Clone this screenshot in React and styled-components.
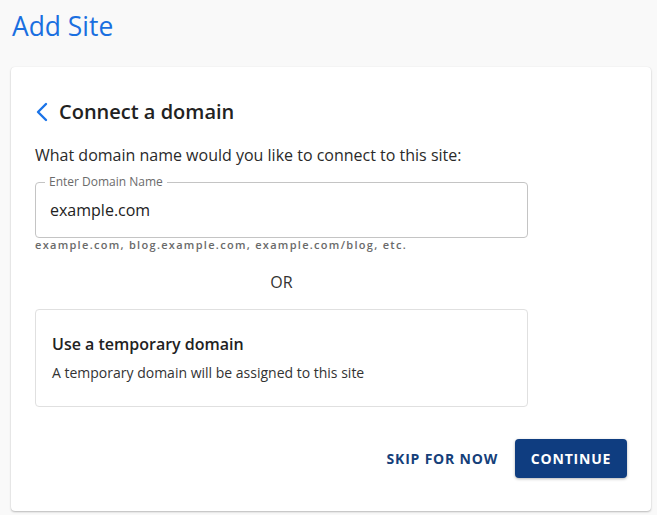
import React, { useState } from "react";
import styled, { createGlobalStyle } from "styled-components";

const GlobalStyle = createGlobalStyle`
  html, body {
    margin: 0;
    padding: 0;
    background: #f9f9f9;
    font-family: "Open Sans", "Noto Sans", sans-serif;
    color: #222;
  }
  * { box-sizing: border-box; }
`;

function App() {
  const [domain, setDomain] = useState("example.com");

  return (
    <>
      <GlobalStyle />
      <Page>
        <PageTitle>Add Site</PageTitle>
        <Card>
          <Header>
            <BackBtn aria-label="Back">
              <svg width="14" height="20" viewBox="0 0 14 20" fill="none">
                <path
                  d="M11 2L3 10L11 18"
                  stroke="#1a73e8"
                  strokeWidth="2.4"
                  strokeLinecap="round"
                  strokeLinejoin="round"
                />
              </svg>
            </BackBtn>
            <Heading>Connect a domain</Heading>
          </Header>

          <Question>What domain name would you like to connect to this site:</Question>

          <Content>
            <Field>
              <Legend>Enter Domain Name</Legend>
              <Input value={domain} onChange={(e) => setDomain(e.target.value)} />
            </Field>
            <Helper>example.com, blog.example.com, example.com/blog, etc.</Helper>

            <Or>OR</Or>

            <Option>
              <OptionTitle>Use a temporary domain</OptionTitle>
              <OptionText>A temporary domain will be assigned to this site</OptionText>
            </Option>
          </Content>

          <Actions>
            <TextBtn>Skip for now</TextBtn>
            <PrimaryBtn>Continue</PrimaryBtn>
          </Actions>
        </Card>
      </Page>
    </>
  );
}

export default App;

const Page = styled.div`
  padding: 6px 6px 4px 11px;
`;

const PageTitle = styled.h1`
  margin: 0 0 0 1px;
  font-size: 26.4px;
  font-weight: 400;
  line-height: 40px;
  color: #1a6fe0;
`;

const Card = styled.div`
  margin-top: 21px;
  width: 640px;
  background: #fff;
  border-radius: 4px;
  box-shadow: 0 1px 2px rgba(0, 0, 0, 0.25), 0 0 1px rgba(0, 0, 0, 0.08);
  padding: 31px 24px 33px 24px;
`;

const Header = styled.div`
  display: flex;
  align-items: center;
  gap: 10px;
`;

const BackBtn = styled.button`
  border: none;
  background: none;
  padding: 0;
  width: 14px;
  height: 20px;
  display: flex;
  cursor: pointer;
`;

const Heading = styled.h2`
  margin: 0;
  font-size: 20px;
  font-weight: 600;
  line-height: 28px;
  color: #222;
`;

const Question = styled.p`
  margin: 18px 0 0;
  font-size: 16px;
  line-height: 22px;
  color: #2a2a2a;
`;

const Content = styled.div`
  width: 493px;
`;

const Field = styled.fieldset`
  margin: 10px 0 -6px;
  padding: 0 14px;
  height: 62px;
  border: 1px solid #c4c4c4;
  border-radius: 4px;
`;

const Legend = styled.legend`
  padding: 0 4px;
  margin-left: -5px;
  font-size: 12px;
  line-height: 12px;
  color: #6b6b6b;
`;

const Input = styled.input`
  display: block;
  width: 100%;
  border: none;
  outline: none;
  padding: 0;
  margin-top: 10px;
  height: 24px;
  font-family: inherit;
  font-size: 16px;
  color: #222;
  background: transparent;
`;

const Helper = styled.div`
  margin-top: 6px;
  font-size: 11px;
  font-weight: 600;
  letter-spacing: 1.3px;
  line-height: 14px;
  color: #6a6a6a;
`;

const Or = styled.div`
  margin-top: 19px;
  text-align: center;
  font-size: 16px;
  line-height: 22px;
  color: #333;
`;

const Option = styled.div`
  margin-top: 16px;
  height: 98px;
  border: 1px solid #e0e0e0;
  border-radius: 4px;
  padding: 23px 16px 0;
`;

const OptionTitle = styled.div`
  font-size: 16px;
  font-weight: 600;
  line-height: 22px;
  color: #222;
`;

const OptionText = styled.div`
  margin-top: 8px;
  font-size: 14px;
  line-height: 20px;
  color: #333;
`;

const Actions = styled.div`
  margin-top: 32px;
  display: flex;
  justify-content: flex-end;
  align-items: center;
  gap: 17px;
`;

const TextBtn = styled.button`
  border: none;
  background: none;
  padding: 0;
  font-family: inherit;
  font-size: 14px;
  font-weight: 700;
  letter-spacing: 0.8px;
  text-transform: uppercase;
  color: #15407a;
  cursor: pointer;
`;

const PrimaryBtn = styled.button`
  width: 112px;
  height: 39px;
  border: none;
  border-radius: 4px;
  background: #0f3d80;
  color: #fff;
  font-family: inherit;
  font-size: 14px;
  font-weight: 700;
  letter-spacing: 0.8px;
  text-transform: uppercase;
  box-shadow: 0 1px 3px rgba(0, 0, 0, 0.3);
  cursor: pointer;
`;
